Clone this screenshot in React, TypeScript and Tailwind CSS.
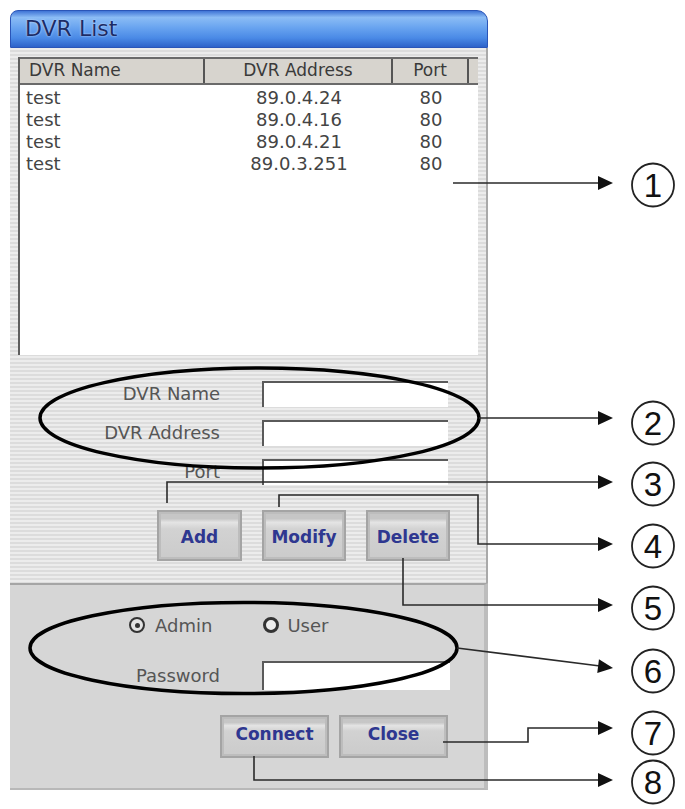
import React from "react";

interface DvrRow {
  name: string;
  address: string;
  port: string;
}

const rows: DvrRow[] = [
  { name: "test", address: "89.0.4.24", port: "80" },
  { name: "test", address: "89.0.4.16", port: "80" },
  { name: "test", address: "89.0.4.21", port: "80" },
  { name: "test", address: "89.0.3.251", port: "80" },
];

const WinButton = ({ label, className }: { label: string; className: string }) => (
  <div
    className={`flex items-end justify-center pb-[9px] border-2 border-[#a4a4a4] bg-[linear-gradient(180deg,#c6c6c6_0%,#c6c6c6_14%,#e4e4e4_22%,#d2d2d2_36%,#cbcbcb_100%)] shadow-[inset_0_0_0_2px_#bdbdbd] text-[17px] font-bold text-[#2e3790] ${className}`}
  >
    {label}
  </div>
);

const Field = ({ label, className }: { label: string; className: string }) => (
  <div className="flex items-center gap-[42px]">
    <div className="w-[202px] text-right text-[18px] text-[#555]">{label}</div>
    <div className={`bg-white border-t-2 border-l-2 border-[#5a5a5a] ${className}`} />
  </div>
);

const Radio = ({ checked }: { checked: boolean }) => (
  <div
    className={`w-4 h-4 rounded-full flex items-center justify-center border-[#333] ${
      checked ? "border-[2.5px] bg-[#e2e2e2]" : "border-[3px] bg-[#eeeeee]"
    }`}
  >
    {checked && <div className="w-[5px] h-[5px] rounded-full bg-[#333]" />}
  </div>
);

const arrow = (y: number) => `598,${y - 7} 613,${y} 598,${y + 7}`;

const markers = [
  { n: "1", y: 185 },
  { n: "2", y: 423 },
  { n: "3", y: 484 },
  { n: "4", y: 546 },
  { n: "5", y: 608 },
  { n: "6", y: 671 },
  { n: "7", y: 733 },
  { n: "8", y: 782 },
];

export default function App() {
  return (
    <div className="relative w-[685px] h-[809px] bg-white font-['DejaVu_Sans',sans-serif] overflow-hidden">
      <div className="ml-[10px] pt-[10px] w-[478px] flex flex-col">
        {/* title bar */}
        <div className="h-[38px] rounded-tl-[8px] rounded-tr-[11px] border border-[#2a55b8] bg-[linear-gradient(180deg,#3f74d6_0%,#8bbcf5_18%,#6aa5f0_45%,#4a8ae6_75%,#2d62c9_100%)] flex items-center pl-[14px]">
          <span className="text-[22px] text-[#1b2c66] [text-shadow:0_0_2px_#d6e6ff] leading-none">
            DVR List
          </span>
        </div>

        {/* upper striped section */}
        <div className="px-[8px] pt-[9px] pb-[22px] border-r-2 border-[#a9a9a9] bg-[repeating-linear-gradient(180deg,#ececec_0px,#ececec_2px,#dcdcdc_2px,#dcdcdc_4px)]">
          <div className="h-[298px] bg-white border-l-2 border-[#5e5e5e] flex flex-col">
            <div className="h-[28px] flex border-t-2 border-b-2 border-[#6a6a6a] bg-[#d7d4ce] text-[17px] text-[#3a3a3a]">
              <div className="w-[185px] pl-[9px] flex items-center border-r-2 border-[#555]">DVR Name</div>
              <div className="w-[188px] flex items-center justify-center border-r-2 border-[#555]">
                DVR Address
              </div>
              <div className="w-[76px] flex items-center justify-center border-r-2 border-[#555]">Port</div>
              <div className="flex-1" />
            </div>
            <div className="pt-[2px] text-[18px] text-[#444] leading-[22px]">
              {rows.map((r, i) => (
                <div key={i} className="flex">
                  <div className="w-[185px] pl-[6px]">{r.name}</div>
                  <div className="w-[188px] text-center">{r.address}</div>
                  <div className="w-[76px] text-center">{r.port}</div>
                </div>
              ))}
            </div>
          </div>

          <div className="mt-[25px] flex flex-col gap-[12px]">
            <Field label="DVR Name" className="w-[186px] h-[26px]" />
            <Field label="DVR Address" className="w-[186px] h-[26px]" />
            <Field label="Port" className="w-[186px] h-[26px]" />
          </div>

          <div className="mt-[25px] pl-[139px] flex gap-[20px]">
            <WinButton label="Add" className="w-[85px] h-[51px]" />
            <WinButton label="Modify" className="w-[84px] h-[51px]" />
            <WinButton label="Delete" className="w-[84px] h-[51px]" />
          </div>
        </div>

        {/* lower section */}
        <div className="px-[8px] pt-[30px] pb-[30px] border-t-2 border-b-2 border-r-4 border-t-[#a5a5a5] border-b-[#b8b8b8] border-r-[#bdbdbd] bg-[#d6d6d6]">
          <div className="h-[20px] pl-[111px] flex items-center text-[18px] text-[#555]">
            <Radio checked />
            <span className="ml-[10px]">Admin</span>
            <div className="ml-[51px]">
              <Radio checked={false} />
            </div>
            <span className="ml-[8px]">User</span>
          </div>

          <div className="mt-[26px]">
            <Field label="Password" className="w-[188px] h-[29px]" />
          </div>

          <div className="mt-[25px] pl-[202px] flex gap-[10px]">
            <WinButton label="Connect" className="w-[109px] h-[43px] pb-[7px]" />
            <WinButton label="Close" className="w-[109px] h-[43px] pb-[7px]" />
          </div>
        </div>
      </div>

      {/* callout annotations */}
      <svg
        className="absolute left-0 top-0 pointer-events-none"
        width="685"
        height="809"
        viewBox="0 0 685 809"
      >
        <g fill="none" stroke="#000" strokeWidth="3.5">
          <ellipse cx="259.5" cy="418" rx="219.5" ry="50" />
          <ellipse cx="243.5" cy="648" rx="213.5" ry="45.5" />
        </g>
        <g fill="none" stroke="#2a2a2a" strokeWidth="1.6">
          <path d="M453 183 H600" />
          <path d="M479 418 H600" />
          <path d="M167 503 V482 H600" />
          <path d="M279 507 V495 H478 V544 H600" />
          <path d="M403 558 V605 H600" />
          <path d="M457 648 L600 666" />
          <path d="M443 742 H528 V728 H600" />
          <path d="M254 756 V780 H600" />
        </g>
        <g fill="#111">
          <polygon points={arrow(183)} />
          <polygon points={arrow(418)} />
          <polygon points={arrow(482)} />
          <polygon points={arrow(544)} />
          <polygon points={arrow(605)} />
          <polygon points={arrow(668)} transform="rotate(7 613 668)" />
          <polygon points={arrow(728)} />
          <polygon points={arrow(780)} />
        </g>
        {markers.map((m) => (
          <g key={m.n}>
            <ellipse cx="653" cy={m.y} rx="21" ry="21.5" fill="#fff" stroke="#222" strokeWidth="1.8" />
            <text
              x="653"
              y={m.y + 12}
              textAnchor="middle"
              fontSize="33"
              fill="#111"
              fontFamily="'Liberation Sans', Arial, sans-serif"
            >
              {m.n}
            </text>
          </g>
        ))}
      </svg>
    </div>
  );
}
